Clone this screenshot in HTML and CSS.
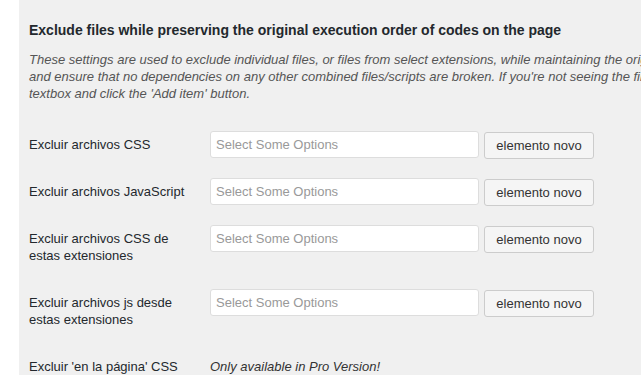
FILE: index.html
```html
<!DOCTYPE html>
<html lang="en">
<head>
    <meta charset="UTF-8">
    <title>Exclude files</title>
    <link rel="stylesheet" href="styles.css">
</head>
<body>
    <div class="panel">
        <!-- Section heading -->
        <h3 class="section-title">Exclude files while preserving the original execution order of codes on the page</h3>
        <p class="section-desc">These settings are used to exclude individual files, or files from select extensions, while maintaining the original execution order of codes on the page<br>and ensure that no dependencies on any other combined files/scripts are broken. If you're not seeing the file you want, type its name into the<br>textbox and click the 'Add item' button.</p>

        <!-- Exclusion rows -->
        <div class="form-rows">
            <div class="form-row">
                <label class="row-label">Excluir archivos CSS</label>
                <div class="row-field">
                    <input type="text" class="chosen" placeholder="Select Some Options">
                    <button class="btn">elemento novo</button>
                </div>
            </div>
            <div class="form-row">
                <label class="row-label">Excluir archivos JavaScript</label>
                <div class="row-field">
                    <input type="text" class="chosen" placeholder="Select Some Options">
                    <button class="btn">elemento novo</button>
                </div>
            </div>
            <div class="form-row">
                <label class="row-label">Excluir archivos CSS de estas extensiones</label>
                <div class="row-field">
                    <input type="text" class="chosen" placeholder="Select Some Options">
                    <button class="btn">elemento novo</button>
                </div>
            </div>
            <div class="form-row">
                <label class="row-label">Excluir archivos js desde estas extensiones</label>
                <div class="row-field">
                    <input type="text" class="chosen" placeholder="Select Some Options">
                    <button class="btn">elemento novo</button>
                </div>
            </div>
            <div class="form-row">
                <label class="row-label">Excluir 'en la página' CSS</label>
                <div class="row-field">
                    <span class="pro-note">Only available in Pro Version!</span>
                </div>
            </div>
        </div>
    </div>
</body>
</html>
```

FILE: styles.css
```css
/* General styling */
* {
    margin: 0;
    padding: 0;
    box-sizing: border-box;
}
html, body {
    height: 100%;
    overflow: hidden;
}
body {
    font-family: 'Liberation Sans', Arial, sans-serif;
    font-size: 13px;
    color: #333;
    background-color: #fff;
}

/* Grey settings panel */
.panel {
    margin-left: 19px;
    width: 900px;
    height: 100%;
    padding: 21px 10px 0;
    background-color: #f0f0f0;
}

.section-title {
    font-size: 14px;
    font-weight: bold;
    line-height: 18px;
    color: #23282d;
    margin-bottom: 12px;
}

.section-desc {
    font-style: italic;
    line-height: 17px;
    color: #555;
    white-space: nowrap;
}

/* Rows */
.form-rows {
    margin-top: 19px;
}

.form-row {
    display: flex;
    align-items: flex-start;
    padding: 10px 0;
}

.row-label {
    width: 181px;
    padding: 5px 20px 5px 0;
    line-height: 17px;
    color: #23282d;
}

.row-field {
    display: flex;
    align-items: flex-start;
    gap: 5px;
    height: 27px;
}

.chosen {
    width: 269px;
    height: 27px;
    padding: 0 5px;
    font-family: inherit;
    font-size: 13px;
    color: #333;
    background-color: #fff;
    border: 1px solid #ddd;
    border-radius: 3px;
}

.chosen::placeholder {
    color: #999;
}

.btn {
    width: 110px;
    height: 27px;
    margin-top: 1px;
    font-family: inherit;
    font-size: 13px;
    color: #333;
    background-color: #f5f5f5;
    border: 1px solid #ccc;
    border-radius: 3px;
}

.pro-note {
    display: block;
    padding-top: 5px;
    line-height: 17px;
    font-style: italic;
    color: #333;
}
```
